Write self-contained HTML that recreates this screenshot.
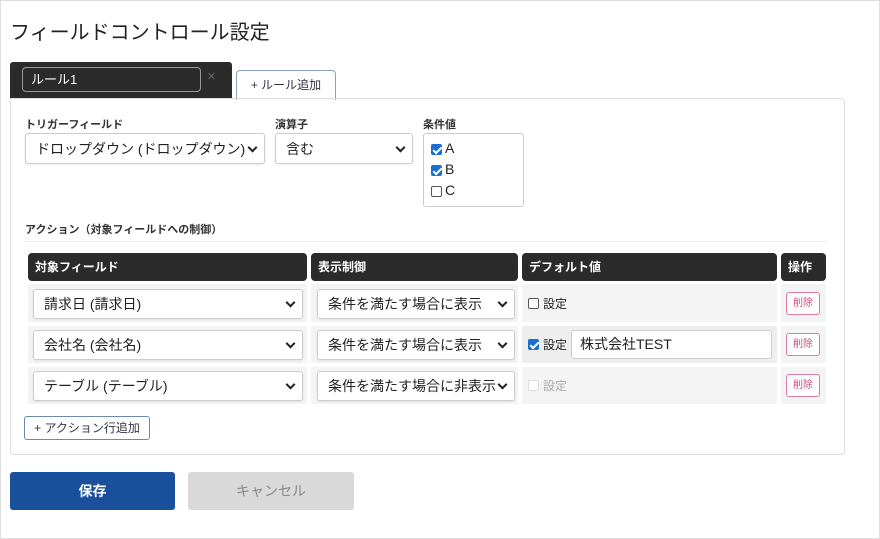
<!DOCTYPE html>
<html><head><meta charset="utf-8"><style>
*{box-sizing:border-box;margin:0;padding:0}
body{width:880px;height:539px;background:#fff;font-family:"Liberation Sans","Noto Sans CJK JP",sans-serif;color:#222;position:relative;overflow:hidden}
.a{position:absolute}
.sel{position:absolute;background:#fff;border:1px solid #ccc;border-radius:3px;font-size:14px;padding-left:10px;display:flex;align-items:center;box-shadow:0 1px 2px rgba(0,0,0,.08);white-space:nowrap;overflow:hidden}
.sel:after{content:"";position:absolute;right:8px;top:50%;width:5px;height:5px;border-right:2px solid #222;border-bottom:2px solid #222;transform:translateY(-70%) rotate(45deg)}
.lbl{position:absolute;font-size:11px;font-weight:bold;color:#333}
.hd{position:absolute;top:253px;height:28px;background:#2b2b2b;color:#fff;font-size:12px;font-weight:bold;border-radius:4px;padding-left:7px;line-height:28px}
.cell{position:absolute;background:#f4f4f4}
.cb{position:absolute;width:11px;height:11px;border:1px solid #555;border-radius:2px;background:#fff}
.cb.on{background:#1a6fd0;border-color:#1a6fd0}
.cb.on:after{content:"";position:absolute;left:3px;top:0px;width:3px;height:7px;border-right:2px solid #fff;border-bottom:2px solid #fff;transform:rotate(45deg)}
.del{position:absolute;left:786px;width:34px;height:23px;border:1px solid #e07aa0;border-radius:3px;color:#d04a80;font-size:10px;text-align:center;line-height:21px;background:#fff}
</style></head><body>
<div class="a" style="left:0;top:0;width:880px;height:539px;border:1px solid #ddd"></div>
<div class="a" style="left:10px;top:16px;font-size:20px;color:#222">フィールドコントロール設定</div>
<div class="a" style="left:10px;top:62px;width:222px;height:37px;background:#2b2b2b;border-radius:3px 3px 0 0"></div>
<div class="a" style="left:22px;top:67px;width:179px;height:25px;border:1px solid #999;border-radius:4px;background:#2b2b2b;color:#fff;font-size:13px;padding-left:8px;line-height:23px">ルール1</div>
<div class="a" style="left:207px;top:68px;color:#666;font-size:15px">×</div>
<div class="a" style="left:236px;top:70px;width:100px;height:30px;border:1px solid #8aa0c0;border-bottom:none;border-radius:4px 4px 0 0;background:#fff;font-size:12px;color:#334;text-align:center;line-height:28px">+ ルール追加</div>
<div class="a" style="left:10px;top:98px;width:835px;height:357px;border:1px solid #ddd;border-radius:0 4px 4px 4px"></div>
<div class="lbl" style="left:25px;top:116px">トリガーフィールド</div>
<div class="lbl" style="left:275px;top:116px">演算子</div>
<div class="lbl" style="left:423px;top:116px">条件値</div>
<div class="sel" style="left:25px;top:133px;width:240px;height:31px">ドロップダウン (ドロップダウン)</div>
<div class="sel" style="left:275px;top:133px;width:138px;height:31px">含む</div>
<div class="a" style="left:423px;top:133px;width:101px;height:74px;border:1px solid #ccc;border-radius:3px"></div>
<div class="cb on" style="left:431px;top:144px"></div><div class="a" style="left:445px;top:140px;font-size:14px">A</div>
<div class="cb on" style="left:431px;top:165px"></div><div class="a" style="left:445px;top:161px;font-size:14px">B</div>
<div class="cb" style="left:431px;top:186px"></div><div class="a" style="left:445px;top:182px;font-size:14px">C</div>
<div class="lbl" style="left:25px;top:221px">アクション（対象フィールドへの制御）</div>
<div class="a" style="left:24px;top:241px;width:804px;height:1px;background:#eee"></div>
<div class="hd" style="left:28px;width:279px">対象フィールド</div>
<div class="hd" style="left:311px;width:207px">表示制御</div>
<div class="hd" style="left:522px;width:255px">デフォルト値</div>
<div class="hd" style="left:781px;width:45px">操作</div>

<div class="cell" style="left:28px;top:284px;width:279px;height:38px"></div>
<div class="cell" style="left:311px;top:284px;width:207px;height:38px"></div>
<div class="cell" style="left:522px;top:284px;width:255px;height:38px"></div>
<div class="cell" style="left:781px;top:284px;width:45px;height:38px"></div>
<div class="sel" style="left:33px;top:289px;width:270px;height:30px">請求日 (請求日)</div>
<div class="sel" style="left:317px;top:289px;width:198px;height:30px">条件を満たす場合に表示</div>
<div class="cb" style="left:528px;top:298px"></div><div class="a" style="left:543px;top:295px;font-size:12px">設定</div>
<div class="del" style="top:292px">削除</div>

<div class="cell" style="left:28px;top:326px;width:279px;height:37px"></div>
<div class="cell" style="left:311px;top:326px;width:207px;height:37px"></div>
<div class="cell" style="left:522px;top:326px;width:255px;height:37px;background:#eee"></div>
<div class="cell" style="left:781px;top:326px;width:45px;height:37px"></div>
<div class="sel" style="left:33px;top:330px;width:270px;height:30px">会社名 (会社名)</div>
<div class="sel" style="left:317px;top:330px;width:198px;height:30px">条件を満たす場合に表示</div>
<div class="cb on" style="left:528px;top:339px"></div><div class="a" style="left:543px;top:336px;font-size:12px">設定</div>
<div class="a" style="left:571px;top:330px;width:201px;height:29px;border:1px solid #ccc;border-radius:3px;background:#fff;font-size:14px;padding-left:8px;line-height:27px">株式会社TEST</div>
<div class="del" style="top:333px">削除</div>

<div class="cell" style="left:28px;top:367px;width:279px;height:37px"></div>
<div class="cell" style="left:311px;top:367px;width:207px;height:37px"></div>
<div class="cell" style="left:522px;top:367px;width:255px;height:37px"></div>
<div class="cell" style="left:781px;top:367px;width:45px;height:37px"></div>
<div class="sel" style="left:33px;top:371px;width:270px;height:30px">テーブル (テーブル)</div>
<div class="sel" style="left:317px;top:371px;width:198px;height:30px;padding-right:20px">条件を満たす場合に非表示</div>
<div class="cb" style="left:528px;top:380px;border-color:#ddd"></div><div class="a" style="left:543px;top:377px;font-size:12px;color:#aaa">設定</div>
<div class="del" style="top:374px">削除</div>

<div class="a" style="left:24px;top:416px;width:126px;height:24px;border:1px solid #6a8ab0;border-radius:3px;font-size:12px;color:#334;text-align:center;line-height:22px">+ アクション行追加</div>
<div class="a" style="left:10px;top:472px;width:165px;height:38px;background:#1a4f9c;border-radius:3px;color:#fff;font-size:14px;font-weight:bold;text-align:center;line-height:38px">保存</div>
<div class="a" style="left:188px;top:472px;width:166px;height:38px;background:#d9d9d9;border-radius:3px;color:#888;font-size:14px;text-align:center;line-height:38px">キャンセル</div>
</body></html>
